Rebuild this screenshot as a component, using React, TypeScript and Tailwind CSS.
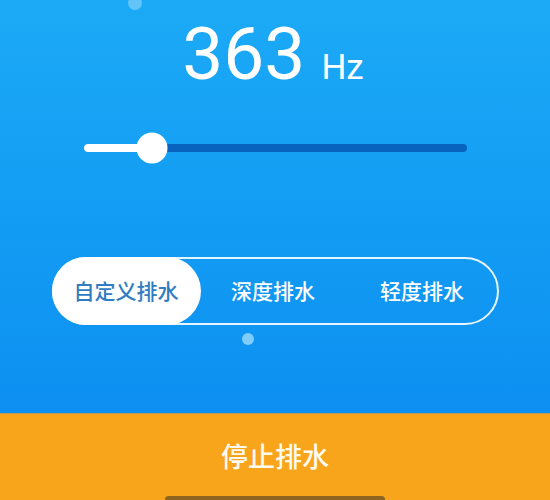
import React from "react"

const modes = ["自定义排水", "深度排水", "轻度排水"]

export default function App() {
  const [mode, setMode] = React.useState(0)
  const value = 363
  const pct = 18

  return (
    <div
      className="relative flex h-[500px] w-[550px] flex-col overflow-hidden bg-gradient-to-b from-[#1caaf6] to-[#0a8af0] text-white"
      style={{ fontFamily: '"Noto Sans CJK SC", "Noto Sans", sans-serif' }}
    >
      {/* bubbles */}
      <div className="absolute left-[128px] top-[-4px] h-[14px] w-[14px] rounded-full bg-[#62c4f8]" />

      {/* frequency readout */}
      <div className="flex items-baseline justify-center pt-[6px] pr-[4px]">
        <span
          className="text-[73px] leading-[96px] font-normal"
          style={{ fontFamily: "Roboto, sans-serif" }}
        >
          {value}
        </span>
        <span
          className="ml-[16px] text-[35px] font-normal"
          style={{ fontFamily: "Roboto, sans-serif" }}
        >
          Hz
        </span>
      </div>

      {/* slider */}
      <div className="mx-auto mt-[42px] w-[383px]">
        <div className="relative h-[8px] rounded-full bg-[#0763bd]">
          <div className="h-full rounded-full bg-white" style={{ width: `${pct}%` }} />
          <div
            className="absolute top-1/2 h-[31px] w-[31px] -translate-x-1/2 -translate-y-1/2 rounded-full bg-white"
            style={{ left: `${pct}%` }}
          />
        </div>
      </div>

      {/* mode switch */}
      <div className="mx-auto mt-[105px] flex h-[68px] w-[447px] rounded-full border-2 border-white/90">
        {modes.map((m, i) => (
          <button
            key={m}
            onClick={() => setMode(i)}
            className={
              i === mode
                ? "-m-[2px] flex flex-1 items-center justify-center rounded-full bg-white text-[21px] font-medium text-[#2f7cc3]"
                : "flex flex-1 items-center justify-center text-[21px] font-medium text-white"
            }
          >
            {m}
          </button>
        ))}
      </div>

      <div className="ml-[242px] mt-[8px] h-[12px] w-[12px] rounded-full bg-[#7fcdfa]" />

      {/* bottom action */}
      <div className="mt-auto flex h-[87px] flex-col border-t border-[#b89a5a] bg-[#f8a51c]">
        <button className="flex flex-1 items-center justify-center pt-[2px] text-[27px] font-medium text-[#fffaf0]">
          停止排水
        </button>
        <div className="mx-auto mb-[-3px] h-[7px] w-[220px] rounded-full bg-[#8f6420]" />
      </div>
    </div>
  )
}
